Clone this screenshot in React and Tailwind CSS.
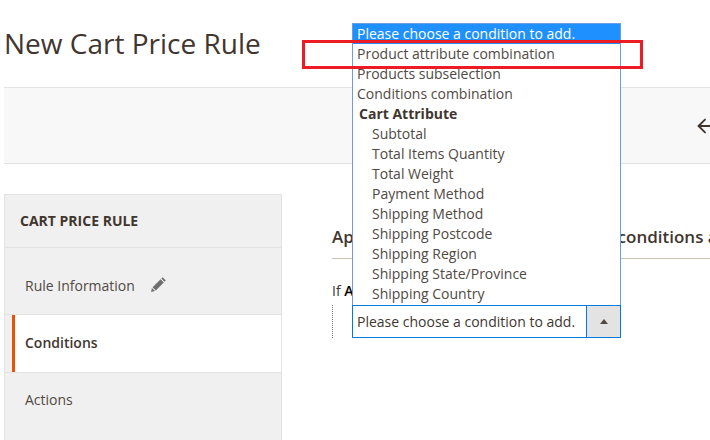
import { ArrowLeft } from 'lucide-react';

const sans = { fontFamily: '"Open Sans", sans-serif' };

const options = [
  { label: 'Product attribute combination' },
  { label: 'Products subselection' },
  { label: 'Conditions combination' },
  { label: 'Cart Attribute', group: true },
  { label: 'Subtotal', child: true },
  { label: 'Total Items Quantity', child: true },
  { label: 'Total Weight', child: true },
  { label: 'Payment Method', child: true },
  { label: 'Shipping Method', child: true },
  { label: 'Shipping Postcode', child: true },
  { label: 'Shipping Region', child: true },
  { label: 'Shipping State/Province', child: true },
  { label: 'Shipping Country', child: true },
];

function Pencil() {
  return (
    <svg width="16" height="16" viewBox="0 0 16 16" className="ml-4 mb-[2px] text-[#6f6f6f]">
      <path fill="currentColor" d="M11.6 1.2l3.2 3.2-1.3 1.3-3.2-3.2zM9.6 3.2l3.2 3.2-8 8-3.2-3.2zM.9 12l3.1 3.1-3.9.9z" />
    </svg>
  );
}

export default function App() {
  return (
    <div className="relative w-[710px] h-[440px] overflow-hidden bg-white text-[14px] text-[#41362f]" style={sans}>
      <h1 className="h-[87px] pl-1 pt-[22px] text-[28px] leading-[42px] font-normal whitespace-nowrap">New Cart Price Rule</h1>

      <div className="ml-1 h-[77px] flex items-center justify-end bg-[#f8f8f8] border-y border-[#e3e3e3] overflow-hidden">
        <ArrowLeft size={22} strokeWidth={2} className="-mr-[6px] text-[#41362f]" />
      </div>

      <div className="flex mt-[30px]">
        <div className="ml-1 w-[278px] shrink-0 h-[246px] bg-[#f0f0f0] border-x border-[#e3e3e3]">
          <div className="h-[54px] pl-[15px] pt-[15px] border-y border-[#e3e3e3] text-[14px] leading-[21px] font-bold whitespace-nowrap">CART PRICE RULE</div>
          <div className="h-[67px] pl-5 pt-2 flex items-center border-b border-[#e3e3e3] text-[#514943]">
            <span>Rule Information</span>
            <Pencil />
          </div>
          <div className="h-[57px] ml-[7px] pl-[10px] pb-[2px] flex items-center bg-white border-l-[3px] border-[#eb5202] font-semibold">Conditions</div>
          <div className="h-[68px] pl-5 pb-[15px] flex items-center border-t border-[#e3e3e3] text-[#514943]">Actions</div>
        </div>

        <div className="ml-[50px] flex-1 min-w-0">
          <div className="mt-[30px] h-[35px] border-b border-[#cac3b4] text-[17px] leading-[26px] font-semibold whitespace-nowrap">Apply the rule only if the following conditions are met</div>
          <div className="mt-[22px] leading-[20px] whitespace-nowrap">If <b className="font-semibold text-black">ALL</b> of these conditions are <b>TRUE</b>:</div>
          <div className="mt-1 h-[33px] border-l border-dotted border-[#7f7f7f]" />
        </div>
      </div>

      {/* open select list */}
      <div className="absolute left-[352px] top-[23px] w-[269px] h-[282px] bg-white border border-[#6d9ce0] border-b-0 leading-[20px] whitespace-nowrap text-[#514943]">
        <div className="h-[20px] pl-1 bg-[#1e90ff] text-white">Please choose a condition to add.</div>
        {options.map((o) => (
          <div
            key={o.label}
            className={o.group ? 'h-[20px] pl-[6px] font-bold text-[#41362f]' : o.child ? 'h-[20px] pl-[19px]' : 'h-[20px] pl-1'}
          >
            {o.label}
          </div>
        ))}
      </div>

      {/* closed select */}
      <div className="absolute left-[352px] top-[305px] w-[269px] h-[33px] flex bg-white border border-[#007bdb] text-[#41362f]">
        <div className="flex-1 pl-1 leading-[31px] whitespace-nowrap">Please choose a condition to add.</div>
        <div className="w-[34px] flex items-center justify-center bg-[#e3e3e3] border-l border-[#007bdb]">
          <svg width="8" height="5" viewBox="0 0 8 5"><path fill="#514943" d="M4 0l4 5H0z" /></svg>
        </div>
      </div>

      {/* red highlight */}
      <div className="absolute left-[302px] top-[40px] w-[341px] h-[29px] border-[3px] border-[#ed1c24]" />
    </div>
  );
}
